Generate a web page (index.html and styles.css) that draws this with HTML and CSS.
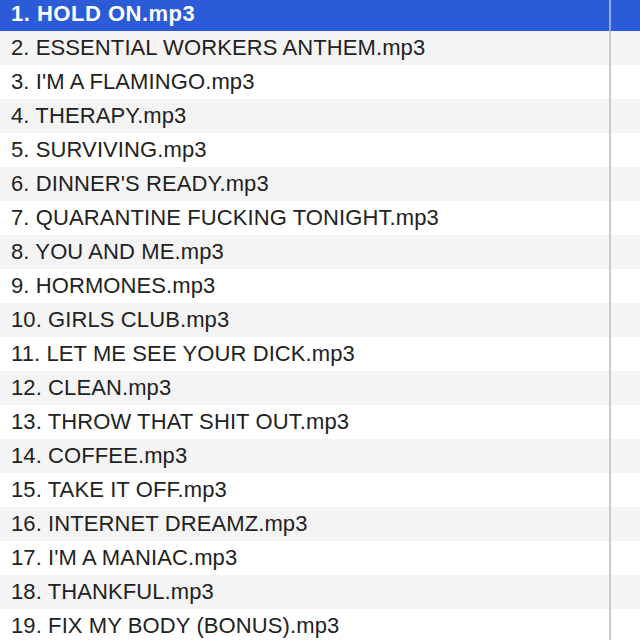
FILE: index.html
```html
<!DOCTYPE html>
<html>
<head>
    <title>Tracks</title>
    <link rel="stylesheet" href="styles.css">
</head>
<body>
    <!-- Finder list view of the album files -->
    <div class="file-list">
        <div class="file-row selected"><span class="name">1. HOLD ON.mp3</span><span class="extra"></span></div>
        <div class="file-row"><span class="name">2. ESSENTIAL WORKERS ANTHEM.mp3</span><span class="extra"></span></div>
        <div class="file-row"><span class="name">3. I'M A FLAMINGO.mp3</span><span class="extra"></span></div>
        <div class="file-row"><span class="name">4. THERAPY.mp3</span><span class="extra"></span></div>
        <div class="file-row"><span class="name">5. SURVIVING.mp3</span><span class="extra"></span></div>
        <div class="file-row"><span class="name">6. DINNER'S READY.mp3</span><span class="extra"></span></div>
        <div class="file-row"><span class="name">7. QUARANTINE FUCKING TONIGHT.mp3</span><span class="extra"></span></div>
        <div class="file-row"><span class="name">8. YOU AND ME.mp3</span><span class="extra"></span></div>
        <div class="file-row"><span class="name">9. HORMONES.mp3</span><span class="extra"></span></div>
        <div class="file-row"><span class="name">10. GIRLS CLUB.mp3</span><span class="extra"></span></div>
        <div class="file-row"><span class="name">11. LET ME SEE YOUR DICK.mp3</span><span class="extra"></span></div>
        <div class="file-row"><span class="name">12. CLEAN.mp3</span><span class="extra"></span></div>
        <div class="file-row"><span class="name">13. THROW THAT SHIT OUT.mp3</span><span class="extra"></span></div>
        <div class="file-row"><span class="name">14. COFFEE.mp3</span><span class="extra"></span></div>
        <div class="file-row"><span class="name">15. TAKE IT OFF.mp3</span><span class="extra"></span></div>
        <div class="file-row"><span class="name">16. INTERNET DREAMZ.mp3</span><span class="extra"></span></div>
        <div class="file-row"><span class="name">17. I'M A MANIAC.mp3</span><span class="extra"></span></div>
        <div class="file-row"><span class="name">18. THANKFUL.mp3</span><span class="extra"></span></div>
        <div class="file-row"><span class="name">19. FIX MY BODY (BONUS).mp3</span><span class="extra"></span></div>
    </div>
</body>
</html>
```

FILE: styles.css
```css
/* Global styles */
html, body {
    margin: 0;
    padding: 0;
    background-color: #ffffff;
    overflow: hidden;
}

body {
    font-family: "Liberation Sans", Arial, sans-serif;
    color: #222222;
}

/* List is scrolled a few pixels, so the first row is cut at the top */
.file-list {
    margin-top: -3px;
}

.file-row {
    display: grid;
    grid-template-columns: 611px 1fr;
    height: 34px;
    line-height: 34px;
    font-size: 22px;
    letter-spacing: 0.1px;
}

/* Zebra striping, starting from the first row */
.file-row:nth-child(even) {
    background-color: #f4f4f4;
}

.file-row .name {
    padding-left: 11px;
    border-right: 2px solid #cacaca; /* column divider */
    white-space: nowrap;
    overflow: hidden;
}

/* Selected row */
.file-row.selected {
    background-color: #2b5bd6;
    color: #ffffff;
    font-weight: bold;
    letter-spacing: 0.5px;
}

.file-row.selected .name {
    border-right-color: #8fa8e6;
}
```
